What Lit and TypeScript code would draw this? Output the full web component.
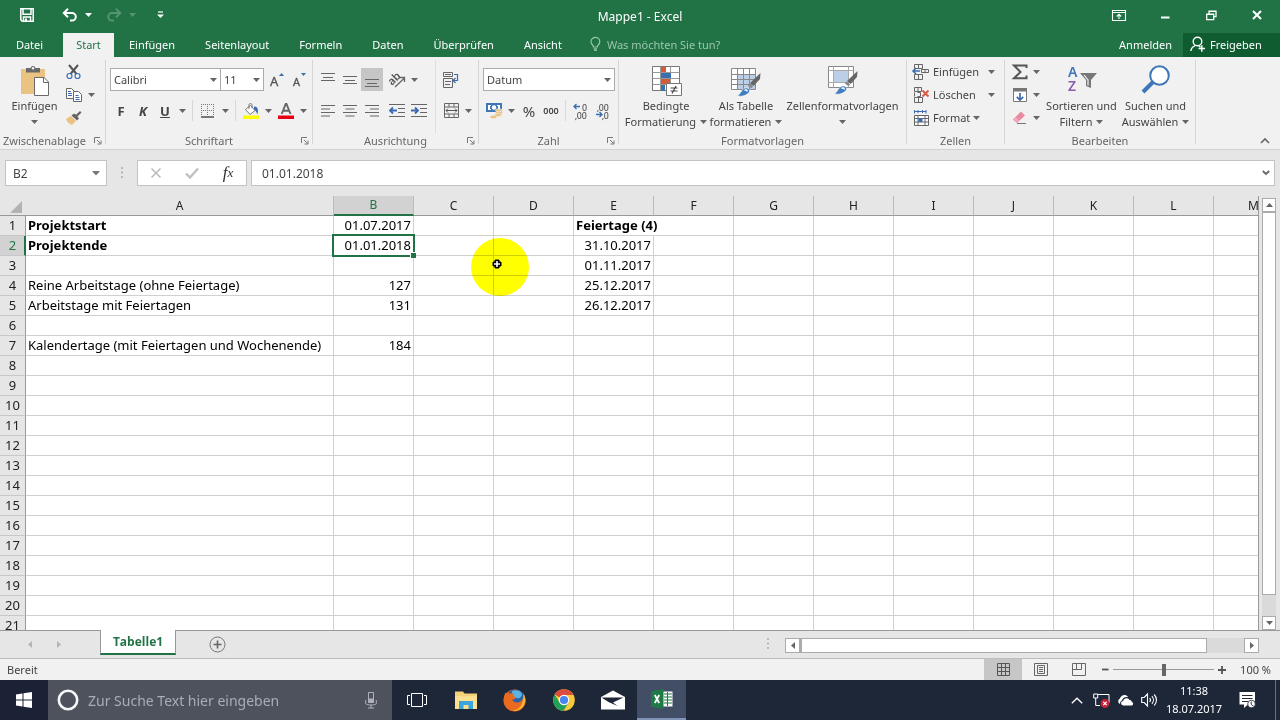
import { LitElement, html, css, svg, nothing } from "lit";
import { customElement, state } from "lit/decorators.js";
import { classMap } from "lit/directives/class-map.js";

const icon = (w: number, h: number, body: unknown) =>
  html`<svg width=${w} height=${h} viewBox="0 0 ${w} ${h}" fill="none" aria-hidden="true">${body}</svg>`;

const G = "#666";
const B = "#3a6bb0";
const down = (color = "#666") => icon(7, 4, svg`<path d="M0 0h7L3.500 4z" fill=${color} />`);

const I = {
  save: icon(14, 14, svg`<path d="M.8.8h12.4v12.4H2.2L.8 11.8z M3 .8v5.4h8V.8 M3.5 13V9h7v4" stroke="#fff" stroke-width="1.5"/><path d="M5 10.5h2V13H5z" fill="#fff"/>`),
  undo: icon(16, 14, svg`<path d="M2 5h8a3.8 3.8 0 0 1 0 7.6H8" stroke="#fff" stroke-width="2"/><path d="M6 .8 1.8 5 6 9.2" stroke="#fff" stroke-width="2"/>`),
  redo: icon(16, 14, svg`<g stroke="#549472" stroke-width="2"><path d="M14 5H6a3.8 3.8 0 0 0 0 7.6h2"/><path d="M10 .8 14.2 5 10 9.2"/></g>`),
  customize: icon(7, 8, svg`<path d="M1 1h5" stroke="#fff" stroke-width="1.2"/><path d="M0 3.5h7L3.500 7z" fill="#fff"/>`),
  ribbonOpts: icon(14, 11, svg`<path d="M.5.5h13v10H.5z M.5 2.500h13 M7 9V4.500 M4.800 6.500 7 4.300l2.200 2.200" stroke="#fff" stroke-width="1.100"/>`),
  minimize: icon(10, 8, svg`<path d="M1 6.500h8.500" stroke="#fff" stroke-width="2"/>`),
  restore: icon(11, 11, svg`<path d="M.7 4.200h7v5.500h-7z M3 4V1.200h7v5.500H8" stroke="#fff" stroke-width="1.300"/><path d="M.5 4.500h7M3 1.500h7" stroke="#fff"/>`),
  close: icon(10, 10, svg`<path d="m1 1 8 8M9 1 1 9" stroke="#fff" stroke-width="2"/>`),
  bulb: icon(11, 14, svg`<path d="M3.500 10c0-2-2.500-2.600-2.500-5.200a4.400 4.400 0 0 1 8.800 0C9.800 7.400 7.300 8 7.300 10z M3.700 11.800h3.400M4.200 13.400h2.400" stroke="#9cc5ae" stroke-width="1.200"/>`),
  person: icon(16, 16, svg`<circle cx="7.500" cy="5.500" r="4.300" stroke="#fff" stroke-width="1.400"/><path d="M.8 15c.5-3 2-4.600 4.400-5.400M9 10l1.500 1.200M8.500 12.500h6.500M11.800 9.300v6.400" stroke="#fff" stroke-width="1.400"/>`),

  paste: icon(30, 32, svg`<path d="M1 4h24v25H1z" fill="#eac282"/><path d="M7 3h3.500a2.600 2.600 0 0 1 5 0H20v4.500H6V3z" fill="#6a6a6a"/><circle cx="13" cy="3.200" r="1.200" fill="#f1f1f1"/><path d="M14.500 12.500H24l4.500 4.500v13.500h-14z" fill="#fff" stroke="#6a6a6a"/><path d="M23.500 12.500V17.500h5" stroke="#6a6a6a"/>`),
  cut: icon(16, 16, svg`<path d="m3 1 7.500 9M12 1 4.500 10" stroke="#555" stroke-width="2"/><circle cx="3.500" cy="12" r="2.500" stroke=${B} stroke-width="1.200"/><circle cx="11.500" cy="12" r="2.500" stroke=${B} stroke-width="1.200"/>`),
  copy: icon(16, 14, svg`<path d="M.5.5h5l3 3v7h-8z" fill="#fff" stroke="#666"/><path d="M7.500 3.500h5l3 3v7h-8z" fill="#fff" stroke="#666"/><path d="M2 3.500h3M2 5.500h4M2 7.500h4M9.500 7.500h3M9.500 9.500h4M9.500 11.500h4" stroke=${B}/>`),
  brush: icon(16, 14, svg`<path d="m0 8 5-3 5 5-4 4C3 13 1 11 0 8z" fill="#eac282"/><path d="m5.500 4.500 5.500 5 2-2-1.500-2L15.500 1.500 14 0 10 3.800 8 2.500z" fill="#666"/>`),
  grow: icon(14, 16, svg`<text x="0" y="14" font-family="Noto Sans" font-size="13" fill="#555" stroke="#555" stroke-width=".3">A</text><path d="M9 4h5L11.500 1z" fill=${B}/>`),
  shrink: icon(14, 16, svg`<text x="1" y="14" font-family="Noto Sans" font-size="11" fill="#555" stroke="#555" stroke-width=".3">A</text><path d="M9 1h5l-2.500 3z" fill=${B}/>`),
  borders: icon(14, 14, svg`<path d="M.5 0v12M6.500 0v12M12.500 0v12M0 .5h13M0 6.500h13" stroke="#777" stroke-dasharray="1 1"/><path d="M0 13h13" stroke="#444" stroke-width="1.400"/>`),
  fill: icon(16, 16, svg`<path d="M0 12.500h16V16H0z" fill="#ff0"/><path d="m2.500 6.500 5-4 4.500 5-5 4z" fill="#fff" stroke="#777"/><path d="M6 6V2c0-2 3-2 3 0v3" stroke="#777"/><path d="M11 3.500c4 0 4.500 3 3.500 8-1-2-1.500-4-3.500-5z" fill=${B}/>`),
  fontColor: icon(16, 16, svg`<path d="M0 12.500h16V16H0z" fill="#e60012"/><path d="M3.700 11 7.700 1h.800l4 10M5.200 7.700h5.800" stroke="#666" stroke-width="1.900"/>`),

  vTop: icon(14, 14, svg`<path d="M0 .5h14M2 4.500h10M0 7.500h14" stroke=${G}/>`),
  vMid: icon(14, 14, svg`<path d="M0 3.500h14M2 7.500h10M0 10.500h14" stroke=${G}/>`),
  vBot: icon(14, 14, svg`<path d="M0 6.500h14M2 10.500h10M0 13.500h14" stroke=${G}/>`),
  left: icon(14, 12, svg`<path d="M0 .5h14M0 4h9M0 7.500h14M0 11h9" stroke=${G}/>`),
  center: icon(14, 12, svg`<path d="M0 .5h14M2.500 4h9M0 7.500h14M2.500 11h9" stroke=${G}/>`),
  right: icon(14, 12, svg`<path d="M0 .5h14M5 4h9M0 7.500h14M5 11h9" stroke=${G}/>`),
  orient: icon(17, 16, svg`<text x="0" y="11" transform="rotate(-45 5 9)" font-family="Noto Sans" font-weight="600" font-size="11" fill="#555">ab</text><path d="M6 15 15.500 6M11 5.500H15.500V10" stroke="#666" stroke-width="1.300"/>`),
  outdent: icon(16, 13, svg`<path d="M0 .5h16M9 4.500h7M9 8.500h7M0 12.500h16" stroke=${G}/><path d="M1 6.500h7M4 3.500l-3 3 3 3" stroke=${B} stroke-width="1.800"/>`),
  indent: icon(16, 13, svg`<path d="M0 .5h16M9 4.500h7M9 8.500h7M0 12.500h16" stroke=${G}/><path d="M0 6.500h7M4 3.500l3 3-3 3" stroke=${B} stroke-width="1.800"/>`),
  wrap: icon(16, 16, svg`<path d="M.5.5h9v4h-9zM.5 6.500h9v9h-9z" stroke=${G}/><path d="M2 2.500h6M2 9.500h6M2 12.500h5" stroke=${G}/><path d="M11 2.500h3.500v6H10M12.500 6 10 8.500l2.500 2.500" stroke=${B} stroke-width="1.200"/>`),
  merge: icon(15, 15, svg`<path d="M.5.5h14v14H.5zM.5 4h14M.5 11h14M5 .5V4M10 .5V4M5 11v3.500M10 11v3.500" stroke=${G}/><path d="M2 7.500h11M4 5.500l-2 2 2 2M11 5.500l2 2-2 2" stroke="#555"/>`),

  money: icon(17, 16, svg`<path d="M0 0h16v9H0z" fill="#3f76b8"/><path d="M2 2h3v1H4v3h1v1H2zM11 2h3v5h-3V6h1V3h-1z" fill="#fff"/><circle cx="8" cy="4.500" r="2.200" fill="#fff"/><g fill="#eac282" stroke="#f1f1f1" stroke-width=".6"><ellipse cx="13" cy="7.500" rx="3.600" ry="1.700"/><ellipse cx="13" cy="10" rx="3.600" ry="1.700"/><ellipse cx="12" cy="12" rx="3.600" ry="1.700"/><ellipse cx="7.500" cy="14" rx="3.600" ry="1.700"/></g>`),
  decMore: icon(16, 16, svg`<path d="M1 3.500h6M3.500 1 1 3.500 3.500 6" stroke=${B} stroke-width="1.300"/><text x="9" y="7.500" font-family="Roboto" font-size="9" fill="#444">0</text><text x="2" y="15.500" font-family="Roboto" font-size="9" fill="#444">,00</text>`),
  decLess: icon(16, 16, svg`<text x="2" y="7.500" font-family="Roboto" font-size="9" fill="#444">,00</text><path d="M1 11.500h6M4.500 9 7 11.500 4.500 14" stroke=${B} stroke-width="1.300"/><text x="7" y="15.500" font-family="Roboto" font-size="9" fill="#444">,0</text>`),

  conditional: icon(31, 32, svg`<path d="M1.500 1.500h27v24h-27z" fill="#fff" stroke="#777"/><path d="M1.500 7.500h27M1.500 13.500h27M1.500 19.500h27M9.500 1.500v24M19.500 1.500v24" stroke="#999"/><path d="M10 2h5v5h-5zM10 14h9v5h-9z" fill="#d35b3a"/><path d="M10 8h10v5H10zM10 20h4v6h-4z" fill="#3a6fb0"/><path d="M15.500 18.500h15v12h-15z" fill="#fff" stroke="#777"/><path d="M19.500 23h7M19.500 26h7M25 21l-4 7.500" stroke="#444" stroke-width="1.200"/>`),
  tableFmt: icon(30, 32, svg`<path d="M.5 3.500h25v22H.5z" fill="#fff"/><path d="M7 9h18v16H7z" fill="#bdcfe6"/><path d="M.5 3.500h24v21H.5zM.5 9.500h24M.5 14.500h24M.5 19.500h24M6.500 3.500v21M12.500 3.500v21M18.500 3.500v21" stroke="#888"/><path d="m29.500 8-.500 6-6.500 7-3.500-3z" fill="#666"/><path d="m18.500 18.500 3.500 3-1.500 1.800-3.700-2.800z" fill="#888"/><path d="M6.500 30.500c3-1 3-4.500 6-6.500 4-3 8 1 5 4s-8 4-11 2.500z" fill="#3f7fc0" stroke="#f1f1f1" stroke-width=".6"/><path d="M13.500 25.500c1.500-1 3-.5 2.500 1" stroke="#fff" stroke-width="1.500"/>`),
  cellFmt: icon(30, 32, svg`<path d="M.5 1.500h25v21H.5z" fill="#fff" stroke="#888"/><path d="M.5 5.500h25M.5 17.500h25M5.500 1.500v21M20.500 1.500v21" stroke="#aaa"/><path d="M6 6h14v11H6z" fill="#bdcfe6"/><path d="m29.500 6-.500 6-6.500 7-3.500-3z" fill="#666"/><path d="m18.500 16.500 3.500 3-1.500 1.800-3.700-2.800z" fill="#888"/><path d="M6.500 28.500c3-1 3-4.500 6-6.500 4-3 8 1 5 4s-8 4-11 2.500z" fill="#3f7fc0" stroke="#f1f1f1" stroke-width=".6"/><path d="M13.500 23.500c1.500-1 3-.5 2.500 1" stroke="#fff" stroke-width="1.500"/>`),

  insertCells: icon(17, 16, svg`<path d="M1.500.5h8v4h-8zM5.500.5v4M1.500 10.500h8v5h-8zM5.500 10.500v5M8.500 5.500h7v3h-7zM12 5.500v3" stroke="#666"/><path d="M0 7h7M3 4 0 7l3 3" stroke=${B} stroke-width="1.500"/>`),
  deleteCells: icon(17, 16, svg`<path d="M1.500.5h7v4h-7zM5 .5v4M1.500 10.500h8v5h-8zM5.500 10.500v5M1.500 5.500v4M4.500 5.500h3v4h-3" stroke="#666"/><path d="m9.500 3.500 6 6M15.500 3.500l-6 6" stroke="#d9573f" stroke-width="1.800"/>`),
  formatCells: icon(17, 16, svg`<path d="M1 1.500h12M1.500 0v3.500M13 0v3.500M5 0v3M9.500 0v3" stroke=${B}/><path d="M1.500 5.500h14v10h-14zM1.500 8.500h14M1.500 12h14M5 5.500v10M12 5.500v10" fill="#fff" stroke="#666"/><path d="M5.500 8h4v4h-4z" fill=${B}/>`),
  sum: icon(16, 16, svg`<path d="M14.500 4V1.500H2L8.500 8 2 14.200h12.500V11.500" stroke="#555" stroke-width="2"/>`),
  fillDown: icon(14, 14, svg`<path d="M.5.5h13v13H.5z" fill="#fff" stroke="#777"/><path d="M0 0h14v3.500H0z" fill="#777"/><path d="M7 5v7M3.800 8.800 7 12l3.200-3.200" stroke=${B} stroke-width="1.700"/>`),
  eraser: icon(15, 14, svg`<path d="m1 8.500 8-8L13 4.500 5 12z" fill="#e98aa0"/><path d="m1 8.500 2.500-2.500 4 3.500L5 12z" fill="#f1a9b8"/><path d="M5 12.500h9" stroke="#777"/>`),
  sortFilter: icon(30, 30, svg`<text x="1" y="12" font-family="Noto Sans" font-weight="600" font-size="14" fill="#3f76b8">A</text><text x="1" y="26" font-family="Noto Sans" font-weight="600" font-size="14" fill="#8b5bb0">Z</text><path d="M13 8h17l-6 7v8l-5-2v-6z" fill="#777"/><path d="m17 10 4 5v5.500" stroke="#f1f1f1" stroke-width="1.200"/>`),
  search: icon(30, 30, svg`<path d="m2 27 10-10" stroke="#3f76b8" stroke-width="4"/><circle cx="18.500" cy="10.500" r="9.300" fill="#fff" stroke="#3f76b8" stroke-width="2"/>`),
  launcher: icon(8, 8, svg`<path d="M.5 6V.5H6" stroke="#777"/><path d="m3 3 3.500 3.500M7 3.500V7H3.500" stroke="#777"/>`),
  collapse: icon(10, 6, svg`<path d="m1 5 4-4 4 4" stroke="#666" stroke-width="1.600"/>`),

  cancel: icon(12, 12, svg`<path d="m1.500 1.500 9 9M10.500 1.500l-9 9" stroke="#b9b9b9" stroke-width="1.500"/>`),
  accept: icon(14, 12, svg`<path d="m1 6.500 4 4L13 1.500" stroke="#c0c0c0" stroke-width="2.400"/>`),
  chevDown: icon(8, 6, svg`<path d="m.8 1 3.200 3L7.200 1" stroke="#666" stroke-width="1.800"/>`),
  dots: icon(2, 12, svg`<path d="M0 1h2M0 5.500h2M0 10h2" stroke="#aaa" stroke-width="1.600"/>`),
  corner: icon(12, 12, svg`<path d="M12 0v12H0z" fill="#b3b3b3"/>`),
  plusCircle: icon(17, 17, svg`<circle cx="8.500" cy="8.500" r="7.500" stroke="#777"/><path d="M8.500 4.500v8M4.500 8.500h8" stroke="#666" stroke-width="1.600"/>`),
  triL: (c = "#666") => icon(4, 7, svg`<path d="M4 0v7L0 3.500z" fill=${c}/>`),
  triR: (c = "#666") => icon(4, 7, svg`<path d="M0 0v7l4-3.500z" fill=${c}/>`),
  triU: icon(7, 4, svg`<path d="M0 4h7L3.500 0z" fill="#666"/>`),
  viewGrid: icon(13, 13, svg`<path d="M.5.5h12v12H.5zM4.500.5v12M8.500.5v12M.5 4.500h12M.5 8.500h12" stroke="#555"/>`),
  viewPage: icon(14, 13, svg`<path d="M.5.5h13v12H.5zM3.500 2.500h7v8h-7zM5 4.500h4M5 6.500h4M5 8.500h4" stroke="#666"/>`),
  viewBreak: icon(14, 13, svg`<path d="M.5.5h13v12H.5zM4.500.5v6M9.500.5v6h-9" stroke="#666"/>`),
  minus: icon(7, 7, svg`<path d="M0 3.500h6.500" stroke="#555" stroke-width="1.800"/>`),
  plus: icon(8, 8, svg`<path d="M4 0v8M0 4h8" stroke="#555" stroke-width="1.800"/>`),
  cursor: icon(10, 10, svg`<path d="M3 1h4v2h2v4H7v2H3V7H1V3h2z" fill="#000" stroke="#000"/><path d="M5 2v6M2 5h6" stroke="#fff" stroke-width="1.600"/>`),

  windows: icon(16, 16, svg`<path d="m0 2.500 6.500-1v6H0zM7.500 1.300 16 0v7.500H7.500zM0 8.500h6.500v6l-6.500-1zM7.500 8.500H16V16l-8.500-1.300z" fill="#fff"/>`),
  cortana: icon(22, 22, svg`<circle cx="11" cy="11" r="9.200" stroke="#f4f6f8" stroke-width="2.600"/>`),
  mic: icon(12, 17, svg`<path d="M3.500.500h5v10h-5z" stroke="#aeb2b8"/><path d="M3.500 6.500h5v4h-5z" fill="#aeb2b8"/><path d="M.700 8v3.500c0 2 10.600 2 10.600 0V8M6 13v3M3 16h6" stroke="#aeb2b8"/>`),
  taskView: icon(20, 14, svg`<path d="M4.500.5h11v13h-11zM3 2.500H.5v9H3M17 2.500h2.500v9H17" stroke="#fff"/>`),
  explorer: icon(22, 19, svg`<path d="M0 .500h8l1.500 2H22V18H0z" fill="#f3d27a"/><path d="M0 5h22v13H0z" fill="#fbe08f"/><path d="M4 18v-8h14v8h-4.500v-4h-5v4z" fill="#3aa5dc"/>`),
  firefox: icon(23, 23, svg`<circle cx="11.500" cy="11.500" r="11" fill="#e8641c"/><path d="M6 3C9-.5 18-.5 21.500 6c1 4-.5 9-4 11-4 1-8-1-9-4L6 8z" fill="#2a62a8"/><path d="M9 2c4-2 9 0 10 3 0 3-3 5-5 4-3 0-5-3-5-7z" fill="#5bb4e0"/><path d="M2.500 3.500c1 .8 2 1.500 3 1.500 1.500-.8 3.500-1 5 0-.5 2.500.5 3 2.500 3.500 0 1-1.500 2-3.500 1.700 0 2 2 3.600 5 3.300 4-.5 6.500-4 6-8.500 3 5 2.500 10-.5 13.500-4 4.500-12 5-16.500 0C-.500 14 .5 8 2.500 3.500z" fill="#ea6a1f"/><path d="M20.500 5c3 5 2 10-1 13.500-3 3-7 4-10 3 7-.5 11-6 11-16.500z" fill="#f9b233"/>`),
  chrome: icon(22, 22, svg`<circle cx="11" cy="11" r="10.800" fill="#f8c73c"/><path d="M11 11 1.700 5.500A10.800 10.800 0 0 1 20.500 6H11z" fill="#dd4b3e"/><path d="M1.700 5.500A10.800 10.800 0 0 0 10.500 21.800L15.500 13.500 11 11 6.500 13.500z" fill="#20a058"/><circle cx="11" cy="11" r="5.200" fill="#fff"/><circle cx="11" cy="11" r="4.100" fill="#4a84ee"/>`),
  mail: icon(24, 20, svg`<path d="M0 7 12 .500 24 7v12.500H0z" fill="#fff"/><path d="M.5 7.500h22L12 12.500l4.500 3.500L7.500 12z" fill="#1e2738"/>`),
  excel: icon(22, 20, svg`<path d="M11 2.500h10.500v15H11z" fill="#fff"/><path d="M13 5h8M13 8h8M13 11h8M13 14h8M16.500 3v14" stroke="#1f7a45"/><path d="M0 2.300 12.500 0v20L0 17.700z" fill="#1f7a45"/><path d="m3.800 6 4.400 8M8.200 6l-4.400 8" stroke="#fff" stroke-width="1.800"/>`),
  chevUp: icon(12, 7, svg`<path d="m.8 6.200 5.200-5 5.200 5" stroke="#fff" stroke-width="1.300"/>`),
  network: icon(17, 15, svg`<path d="M5 1.500h11v8h-2M.700 1h4v4h-4zM2.700 5v7.500H7" stroke="#fff"/><circle cx="12" cy="10.500" r="4.400" fill="#c8233a"/><path d="m10.300 8.800 3.400 3.400M13.700 8.800l-3.400 3.400" stroke="#fff" stroke-width="1.200"/>`),
  cloud: icon(17, 12, svg`<path d="M3 10a3 3 0 0 1 0-5.500C4 1 8.500-.500 11 3c-4-.5-6 2-6 3.500C3.500 7 3 8.500 3 10z" fill="#fff"/><path d="M6.500 11.500a2.300 2.300 0 0 1-.3-4.600c.5-3 5-4 6.300-.8 2 0 2.200 1.200 2.300 1.800 2 .5 1.700 3.400-.3 3.600z" fill="#fff"/>`),
  sound: icon(17, 14, svg`<path d="M.7 4.500h2.500L6.500 1v12L3.200 9.500H.7zM8.700 5c1 1.200 1 2.800 0 4M10.900 3.200c2 2.200 2 5.400 0 7.600M13.200 1.500c3 3.200 3 7.800 0 11" stroke="#fff" stroke-width="1.100"/>`),
  notify: icon(17, 17, svg`<path d="M.500 0h15.500v12.500H9l-4 3.500v-3.500H.500z" fill="#fff"/><path d="M3 3.500h10.500M3 6.500h10.500M3 9.500h6" stroke="#1e2738" stroke-width="1.200"/><circle cx="12.500" cy="12" r="3.800" fill="#fff" stroke="#1e2738" stroke-width=".8"/><path d="M12.500 9.500a3 3 0 0 0 2 4.500" stroke="#1e2738"/>`),
};

interface Cell { text: string; bold?: boolean; right?: boolean; spill?: boolean; }
const COLUMNS = "ABCDEFGHIJKLM".split("");
const ROWS = Array.from({ length: 21 }, (_, i) => i + 1);
const DATA: Record<string, Cell> = {
  A1: { text: "Projektstart", bold: true },
  A2: { text: "Projektende", bold: true },
  A4: { text: "Reine Arbeitstage (ohne Feiertage)" },
  A5: { text: "Arbeitstage mit Feiertagen" },
  A7: { text: "Kalendertage (mit Feiertagen und Wochenende)" },
  B1: { text: "01.07.2017", right: true },
  B2: { text: "01.01.2018", right: true },
  B4: { text: "127", right: true },
  B5: { text: "131", right: true },
  B7: { text: "184", right: true },
  E1: { text: "Feiertage (4)", bold: true, spill: true },
  E2: { text: "31.10.2017", right: true },
  E3: { text: "01.11.2017", right: true },
  E4: { text: "25.12.2017", right: true },
  E5: { text: "26.12.2017", right: true },
};

const base = css`
  :host, *, *::before, *::after { box-sizing: border-box; }
  svg { display: block; flex: none; overflow: visible; }
  button { font: inherit; color: inherit; border: 0; background: none; padding: 0; margin: 0; display: flex; align-items: center; justify-content: center; white-space: nowrap; }
  input, select { font: inherit; color: inherit; border: 0; background: none; padding: 0; margin: 0; min-width: 0; outline: 0; border-radius: 0; }
`;

@customElement("xl-titlebar")
class XlTitlebar extends LitElement {
  static styles = [base, css`
    :host { display: block; background: #217346; color: #fff; }
    .title { display: grid; grid-template-columns: 1fr auto 1fr; height: 33px; align-items: center; }
    .quick { display: flex; align-items: center; padding: 0 0 3px 16px; }
    .quick button { width: 22px; height: 22px; }
    .quick .save { margin-right: 21px; }
    .quick .arrow { width: 14px; margin-right: 8px; }
    .quick .custom { margin-left: 2px; }
    .window { display: flex; justify-content: flex-end; padding-bottom: 3px; }
    .window button { width: 46px; height: 28px; }
    .name { font-size: 12px; }
    .tabs { display: flex; align-items: stretch; height: 24px; }
    .tabs button { padding: 0 15px 2px; }
    .tabs .file { width: 59px; padding: 0 0 2px; margin-right: 4px; }
    .tabs .active { width: 51px; padding: 0 0 2px; background: #f1f1f1; color: #217346; }
    .ask { display: flex; align-items: center; gap: 6px; flex: 1; padding: 0 0 2px 13px; }
    .ask input { width: 180px; }
    .ask input::placeholder { color: #9cc5ae; opacity: 1; }
    .tabs .share { background: #0f5c30; gap: 4px; padding: 0 18px 2px 7px; min-width: 97px; justify-content: flex-start; }
    .tabs .login { padding: 0 11px 2px; }
  `];
  render() {
    return html`
      <header class="title">
        <div class="quick">
          <button class="save" aria-label="Speichern">${I.save}</button>
          <button aria-label="Rückgängig">${I.undo}</button>
          <button class="arrow" aria-label="Rückgängig-Liste">${down("#fff")}</button>
          <button aria-label="Wiederholen">${I.redo}</button>
          <button class="arrow" aria-label="Wiederholen-Liste">${down("#549472")}</button>
          <button class="custom" aria-label="Symbolleiste anpassen">${I.customize}</button>
        </div>
        <div class="name">Mappe1 - Excel</div>
        <div class="window">
          <button aria-label="Menüband-Optionen">${I.ribbonOpts}</button>
          <button aria-label="Minimieren">${I.minimize}</button>
          <button aria-label="Verkleinern">${I.restore}</button>
          <button aria-label="Schließen">${I.close}</button>
        </div>
      </header>
      <nav class="tabs">
        <button class="file">Datei</button>
        <button class="active">Start</button>
        ${["Einfügen", "Seitenlayout", "Formeln", "Daten", "Überprüfen", "Ansicht"].map((t) => html`<button>${t}</button>`)}
        <label class="ask">${I.bulb}<input type="text" placeholder="Was möchten Sie tun?" aria-label="Was möchten Sie tun?" /></label>
        <button class="login">Anmelden</button>
        <button class="share">${I.person}Freigeben</button>
      </nav>`;
  }
}

@customElement("xl-ribbon")
class XlRibbon extends LitElement {
  static styles = [base, css`
    :host { display: grid; grid-template-columns: 106px 207px 166px 140px 288px 98px 191px 1fr; height: 93px; background: #f1f1f1; border-bottom: 1px solid #d2d2d2; color: #444; }
    .group { display: flex; flex-direction: column; position: relative; margin-top: 3px; padding-right: 1px; }
    .group::after { content: ""; position: absolute; top: 0; right: 0; bottom: 5px; width: 1px; background: #d5d5d5; }
    .body { display: flex; flex: 1; min-height: 0; }
    .caption { display: grid; grid-template-columns: 1fr auto 1fr; align-items: center; height: 16px; line-height: 16px; color: #666; }
    .caption span { grid-column: 2; white-space: nowrap; }
    .caption button { justify-self: end; margin-right: 3px; }
    .wide .caption { grid-template-columns: 3px auto 1fr; }
    .large { flex-direction: column; justify-content: flex-start; line-height: 16px; padding-top: 5px; }
    .large svg { margin-bottom: 1px; }
    .large svg[height="30"] { margin-bottom: 3px; }
    .large .line { display: flex; align-items: center; justify-content: center; gap: 4px; height: 16px; }
    .large .line svg { margin: 0; }
    .paste { width: 57px; margin: 0 0 0 6px; }
    .stack { display: flex; flex-direction: column; }
    .stack .row { height: 23px; }
    .row { display: flex; align-items: center; }
    .row button { height: 23px; width: 22px; }
    .row .arr { width: 13px; }
    .row .on { background: #c6c6c6; }
    .row .apart { margin-left: 3px; }
    .row i { width: 1px; height: 21px; background: #d8d8d8; margin: 0 4px 0 3px; }
    .tools { display: flex; flex-direction: column; gap: 8px; padding: 8px 0 0 4px; }
    .split { margin-left: 5px; border-left: 1px solid #dedede; }
    .combo { display: grid; height: 23px; background: #fff; border: 1px solid #ababab; align-items: center; }
    .combo select { grid-area: 1 / 1; appearance: none; padding: 0 16px 0 3px; height: 21px; width: 100%; }
    .combo svg { grid-area: 1 / 1; justify-self: end; margin-right: 3px; pointer-events: none; }
    .family { width: 111px; }
    .size { width: 44px; margin: 0 2px 0 -1px; }
    .number { width: 132px; }
    .glyph { font-size: 13px; font-weight: 700; }
    .italic { font-style: italic; }
    .under { text-decoration: underline; }
    .percent { font-size: 15px; }
    .zeros { font-size: 9px; font-weight: 600; }
    .row .named { width: auto; gap: 3px; }
    .cells { padding-left: 6px; }
    .cells .named { min-width: 72px; justify-content: flex-start; }
    .fmt .b1 { width: 82px; margin-left: 6px; }
    .fmt .b2 { width: 78px; }
    .fmt .b3 { flex: 1; padding-right: 6px; }
    .edit .stack { width: 38px; padding-left: 4px; }
    .edit .b4 { width: 77px; }
    .edit .b5 { width: 71px; }
    .last { flex-direction: row; align-items: flex-end; justify-content: flex-end; }
    .last::after { content: none; }
    .last button { padding: 5px 9px; }
  `];
  private arrow(label: string) { return html`<button class="arr" aria-label=${label}>${down()}</button>`; }
  private group(cls: string, caption: string, launcher: boolean, body: unknown) {
    return html`<section class="group ${cls}">
      <div class="body">${body}</div>
      <div class="caption"><span>${caption}</span>${launcher ? html`<button aria-label="${caption}: Dialogfeld">${I.launcher}</button>` : nothing}</div>
    </section>`;
  }
  private tool(label: string, content: unknown, cls = "") { return html`<button class=${cls} aria-label=${label}>${content}</button>`; }
  render() {
    return html`
      ${this.group("wide", "Zwischenablage", true, html`
        <button class="large paste">${I.paste}<span>Einfügen</span><span class="line">${down()}</span></button>
        <div class="stack">
          <div class="row">${this.tool("Ausschneiden", I.cut)}</div>
          <div class="row">${this.tool("Kopieren", I.copy)}${this.arrow("Kopieren-Liste")}</div>
          <div class="row">${this.tool("Format übertragen", I.brush)}</div>
        </div>`)}
      ${this.group("", "Schriftart", true, html`
        <div class="tools">
          <div class="row">
            <span class="combo family"><select aria-label="Schriftart"><option>Calibri</option></select>${down()}</span>
            <span class="combo size"><select aria-label="Schriftgrad"><option>11</option></select>${down()}</span>
            ${this.tool("Schriftgrad vergrößern", I.grow)}${this.tool("Schriftgrad verkleinern", I.shrink)}
          </div>
          <div class="row">
            <button class="glyph">F</button><button class="glyph italic">K</button><button class="glyph under">U</button>${this.arrow("Unterstreichen-Liste")}
            <i></i>${this.tool("Rahmen", I.borders)}${this.arrow("Rahmen-Liste")}
            <i></i>${this.tool("Füllfarbe", I.fill)}${this.arrow("Füllfarben-Liste")}
            ${this.tool("Schriftfarbe", I.fontColor)}${this.arrow("Schriftfarben-Liste")}
          </div>
        </div>`)}
      ${this.group("", "Ausrichtung", true, html`
        <div class="tools">
          <div class="row">
            ${this.tool("Oben", I.vTop)}${this.tool("Mitte", I.vMid)}${this.tool("Unten", I.vBot, "on")}
            ${this.tool("Ausrichtung", I.orient, "apart")}${this.arrow("Ausrichtung-Liste")}
          </div>
          <div class="row">
            ${this.tool("Linksbündig", I.left)}${this.tool("Zentriert", I.center)}${this.tool("Rechtsbündig", I.right)}
            ${this.tool("Einzug verkleinern", I.outdent, "apart")}${this.tool("Einzug vergrößern", I.indent)}
          </div>
        </div>
        <div class="tools split">
          <div class="row">${this.tool("Zeilenumbruch", I.wrap)}</div>
          <div class="row">${this.tool("Verbinden", I.merge)}${this.arrow("Verbinden-Liste")}</div>
        </div>`)}
      ${this.group("", "Zahl", true, html`
        <div class="tools">
          <div class="row"><span class="combo number"><select aria-label="Zahlenformat"><option>Datum</option></select>${down()}</span></div>
          <div class="row">
            ${this.tool("Buchhaltung", I.money)}${this.arrow("Buchhaltung-Liste")}
            <button class="percent">%</button><button class="zeros">000</button>
            <i></i>${this.tool("Dezimalstelle hinzufügen", I.decMore)}${this.tool("Dezimalstelle löschen", I.decLess)}
          </div>
        </div>`)}
      ${this.group("fmt", "Formatvorlagen", false, html`
        <button class="large b1">${I.conditional}<span>Bedingte</span><span class="line">Formatierung ${down()}</span></button>
        <button class="large b2">${I.tableFmt}<span>Als Tabelle</span><span class="line">formatieren ${down()}</span></button>
        <button class="large b3">${I.cellFmt}<span>Zellenformatvorlagen</span><span class="line">${down()}</span></button>`)}
      ${this.group("", "Zellen", false, html`
        <div class="stack cells">
          <div class="row"><button class="named">${I.insertCells}Einfügen</button>${this.arrow("Einfügen-Liste")}</div>
          <div class="row"><button class="named">${I.deleteCells}Löschen</button>${this.arrow("Löschen-Liste")}</div>
          <div class="row"><button class="named">${I.formatCells}Format ${down()}</button></div>
        </div>`)}
      ${this.group("edit", "Bearbeiten", false, html`
        <div class="stack">
          <div class="row">${this.tool("AutoSumme", I.sum)}${this.arrow("AutoSumme-Liste")}</div>
          <div class="row">${this.tool("Füllbereich", I.fillDown)}${this.arrow("Füllbereich-Liste")}</div>
          <div class="row">${this.tool("Löschen", I.eraser)}${this.arrow("Löschen-Liste")}</div>
        </div>
        <button class="large b4">${I.sortFilter}<span>Sortieren und</span><span class="line">Filtern ${down()}</span></button>
        <button class="large b5">${I.search}<span>Suchen und</span><span class="line">Auswählen ${down()}</span></button>`)}
      <div class="group last"><button aria-label="Menüband reduzieren">${I.collapse}</button></div>`;
  }
}

@customElement("xl-sheet")
class XlSheet extends LitElement {
  @state() private selected = "B2";
  static styles = [base, css`
    :host { display: flex; flex-direction: column; flex: 1; min-height: 0; background: #e6e6e6; }
    .formula { display: flex; padding: 10px 5px; gap: 4px; height: 46px; color: #444; font-size: 12px; }
    .box { display: flex; align-items: center; background: #fff; border: 1px solid #c3c3c3; }
    .namebox { width: 102px; padding: 0 5px 0 7px; }
    .namebox input { flex: 1; }
    .grip { width: 22px; display: grid; place-items: center; }
    .fx { width: 110px; justify-content: space-around; }
    .fx button { width: 36px; height: 23px; }
    .fn { font-family: "Liberation Serif", serif; font-style: italic; font-size: 17px; color: #333; }
    .fn small { font-size: 13px; }
    .value { flex: 1; padding: 0 4px 0 10px; }
    .value input { flex: 1; font-size: 12px; }
    .area { display: flex; flex: 1; min-height: 0; }
    .view { position: relative; flex: 1; min-width: 0; overflow: hidden; border-right: 1px solid #999; background: #fff; }
    table { table-layout: fixed; border-collapse: separate; border-spacing: 0; width: 1294px; font-size: 13px; line-height: 19px; color: #000; }
    col.rows { width: 26px; }
    col.first { width: 308px; }
    col.rest { width: 80px; }
    th, td { height: 20px; padding: 0; white-space: nowrap; }
    th { font-weight: 400; background: #e6e6e6; color: #222; }
    thead th { border-bottom: 1px solid #999; border-right: 1px solid #bbb; font-size: 12px; }
    thead th:first-child { border-right: 0; padding: 2px 4px 0 10px; }
    tbody th { border-right: 1px solid #999; border-bottom: 1px solid #c8c8c8; }
    td { border-right: 1px solid #d0d0d0; border-bottom: 1px solid #d0d0d0; padding: 0 2px; text-align: left; }
    td.right { text-align: right; }
    td.bold { font-weight: 700; }
    td.spill { border-right-color: transparent; }
    thead th.on { background: #d2d2d2; color: #217346; border-bottom: 2px solid #217346; line-height: 18px; }
    tbody th.on { background: #d2d2d2; color: #217346; border-right: 2px solid #217346; padding-left: 1px; }
    td.sel { position: relative; }
    td.sel::before { content: ""; position: absolute; inset: -2px; border: 2px solid #217346; }
    td.sel::after { content: ""; position: absolute; right: -3px; bottom: -3px; width: 6px; height: 6px; background: #217346; border: solid #fff; border-width: 1px 0 0 1px; }
    .halo { position: absolute; left: 471px; top: 42px; width: 58px; height: 58px; border-radius: 50%; background: #ff0; mix-blend-mode: multiply; pointer-events: none; }
    .pointer { position: absolute; left: 492px; top: 63px; pointer-events: none; }
    .vscroll { display: flex; flex-direction: column; width: 14px; margin: 2px 4px 0 3px; background: #dadada; }
    .arrowbtn { width: 14px; height: 14px; background: #fff; border: 1px solid #ababab; flex: none; }
    .thumb { background: #fff; border: 1px solid #ababab; }
    .vscroll .thumb { flex: 0 1 383px; }
    .vscroll .gap { flex: 1 0 20px; }
  `];
  render() {
    const col = this.selected[0];
    const row = Number(this.selected.slice(1));
    return html`
      <div class="formula">
        <div class="box namebox"><input type="text" aria-label="Namenfeld" .value=${this.selected} /><button aria-label="Namenliste">${icon(9, 5, svg`<path d="M0 0h8L4 4.500z" fill="#777"/>`)}</button></div>
        <div class="grip">${I.dots}</div>
        <div class="box fx">
          <button aria-label="Abbrechen">${I.cancel}</button><button aria-label="Eingeben">${I.accept}</button><button class="fn" aria-label="Funktion einfügen">f<small>x</small></button>
        </div>
        <div class="box value"><input type="text" aria-label="Bearbeitungsleiste" .value=${DATA[this.selected]?.text ?? ""} /><button aria-label="Erweitern">${I.chevDown}</button></div>
      </div>
      <div class="area">
        <div class="view">
          <table>
            <colgroup><col class="rows" /><col class="first" />${COLUMNS.slice(1).map(() => html`<col class="rest" />`)}</colgroup>
            <thead><tr><th>${I.corner}</th>${COLUMNS.map((c) => html`<th scope="col" class=${classMap({ on: c === col })}>${c}</th>`)}</tr></thead>
            <tbody>
              ${ROWS.map((r) => html`<tr><th scope="row" class=${classMap({ on: r === row })}>${r}</th>${COLUMNS.map((c) => {
                const key = c + r;
                const d = DATA[key];
                return html`<td class=${classMap({ right: !!d?.right, bold: !!d?.bold, spill: !!d?.spill, sel: key === this.selected })} @click=${() => (this.selected = key)}>${d?.text ?? nothing}</td>`;
              })}</tr>`)}
            </tbody>
          </table>
          <div class="halo"></div>
          <div class="pointer">${I.cursor}</div>
        </div>
        <div class="vscroll">
          <button class="arrowbtn" aria-label="Nach oben">${I.triU}</button>
          <div class="thumb"></div><div class="gap"></div>
          <button class="arrowbtn" aria-label="Nach unten">${down()}</button>
        </div>
      </div>`;
  }
}

@customElement("xl-footer")
class XlFooter extends LitElement {
  static styles = [base, css`
    :host { display: block; color: #444; }
    .sheets { display: flex; align-items: flex-start; height: 28px; background: #e6e6e6; border-top: 1px solid #999; padding-right: 21px; }
    .nav { width: 29px; height: 26px; }
    .nav:first-child { margin-left: 15px; }
    .tab { margin: -1px 0 0 27px; min-width: 76px; height: 25px; background: #fff; color: #217346; font: 700 12px "Open Sans", sans-serif; border: solid #999; border-width: 0 1px; border-bottom: 2px solid #217346; }
    .add { width: 40px; height: 26px; margin-left: 21px; }
    .grip { margin-left: auto; height: 26px; display: flex; align-items: center; margin-right: 16px; }
    .hscroll { display: flex; flex: 0 1 474px; height: 15px; margin-top: 7px; background: #dadada; }
    .arrowbtn { width: 15px; height: 15px; background: #fff; border: 1px solid #ababab; flex: none; }
    .thumb { flex: 0 1 407px; background: #fff; border: 1px solid #ababab; border-left-width: 2px; }
    .gap { flex: 1 0 20px; }
    .status { display: flex; align-items: center; height: 22px; background: #f1f1f1; border-top: 1px solid #bdbdbd; padding: 0 9px 0 7px; }
    .views { display: flex; margin-left: auto; }
    .views button { width: 38px; height: 21px; }
    .views .on { background: #c6c6c6; }
    .zoom { display: flex; align-items: center; }
    .zoom button { width: 15px; height: 20px; }
    input[type="range"] { appearance: none; width: 101px; height: 12px; background: linear-gradient(#999, #999) center / 100% 1px no-repeat; }
    input[type="range"]::-webkit-slider-thumb { appearance: none; width: 4px; height: 12px; background: #666; border-radius: 0; }
    .pct { width: 42px; text-align: right; }
  `];
  render() {
    return html`
      <div class="sheets">
        <button class="nav" aria-label="Vorheriges Blatt">${I.triL("#b5b5b5")}</button>
        <button class="nav" aria-label="Nächstes Blatt">${I.triR("#b5b5b5")}</button>
        <button class="tab">Tabelle1</button>
        <button class="add" aria-label="Neues Blatt">${I.plusCircle}</button>
        <span class="grip">${I.dots}</span>
        <div class="hscroll">
          <button class="arrowbtn" aria-label="Nach links">${I.triL()}</button>
          <div class="thumb"></div><div class="gap"></div>
          <button class="arrowbtn" aria-label="Nach rechts">${I.triR()}</button>
        </div>
      </div>
      <footer class="status">
        <span>Bereit</span>
        <div class="views">
          <button class="on" aria-label="Normal">${I.viewGrid}</button>
          <button aria-label="Seitenlayout">${I.viewPage}</button>
          <button aria-label="Umbruchvorschau">${I.viewBreak}</button>
        </div>
        <div class="zoom">
          <button aria-label="Verkleinern">${I.minus}</button>
          <input type="range" min="0" max="200" value="100" aria-label="Zoom" />
          <button aria-label="Vergrößern">${I.plus}</button>
        </div>
        <span class="pct">100 %</span>
      </footer>`;
  }
}

@customElement("win-taskbar")
class WinTaskbar extends LitElement {
  static styles = [base, css`
    :host { display: flex; height: 40px; background: #1e2738; color: #fff; }
    button { height: 40px; }
    .start { width: 48px; background: #1b2235; }
    .search { display: flex; align-items: center; width: 344px; background: #4d525c; padding: 0 15px 0 9px; gap: 9px; }
    .search input { flex: 1; font-size: 14px; }
    .search input::placeholder { color: #a9adb4; opacity: 1; }
    .app { width: 49px; }
    .current { background: #414e66; border-bottom: 2px solid #8093b8; }
    .tray { display: flex; margin-left: auto; }
    .tray .small { width: 24px; }
    .clock { flex-direction: column; width: 66px; line-height: 18px; }
    .note { width: 40px; margin-right: 8px; }
    .edge { width: 5px; border-left: 1px solid #6a7180; }
  `];
  render() {
    return html`
      <button class="start" aria-label="Start">${I.windows}</button>
      <label class="search">${I.cortana}<input type="text" placeholder="Zur Suche Text hier eingeben" aria-label="Suche" />${I.mic}</label>
      <button class="app" aria-label="Taskansicht">${I.taskView}</button>
      <button class="app" aria-label="Explorer">${I.explorer}</button>
      <button class="app" aria-label="Firefox">${I.firefox}</button>
      <button class="app" aria-label="Chrome">${I.chrome}</button>
      <button class="app" aria-label="Mail">${I.mail}</button>
      <button class="app current" aria-label="Excel">${I.excel}</button>
      <div class="tray">
        <button class="small" aria-label="Ausgeblendete Symbole">${I.chevUp}</button>
        <button class="small" aria-label="Netzwerk">${I.network}</button>
        <button class="small" aria-label="OneDrive">${I.cloud}</button>
        <button class="small" aria-label="Lautstärke">${I.sound}</button>
        <button class="clock"><span>11:38</span><span>18.07.2017</span></button>
        <button class="note" aria-label="Benachrichtigungen">${I.notify}</button>
        <div class="edge"></div>
      </div>`;
  }
}

@customElement("app-root")
class AppRoot extends LitElement {
  static styles = css`
    :host { display: flex; flex-direction: column; height: 100vh; overflow: hidden; font: 11px "Noto Sans", "Open Sans", sans-serif; }
  `;
  render() {
    return html`
      <xl-titlebar></xl-titlebar>
      <xl-ribbon></xl-ribbon>
      <xl-sheet></xl-sheet>
      <xl-footer></xl-footer>
      <win-taskbar></win-taskbar>`;
  }
}
